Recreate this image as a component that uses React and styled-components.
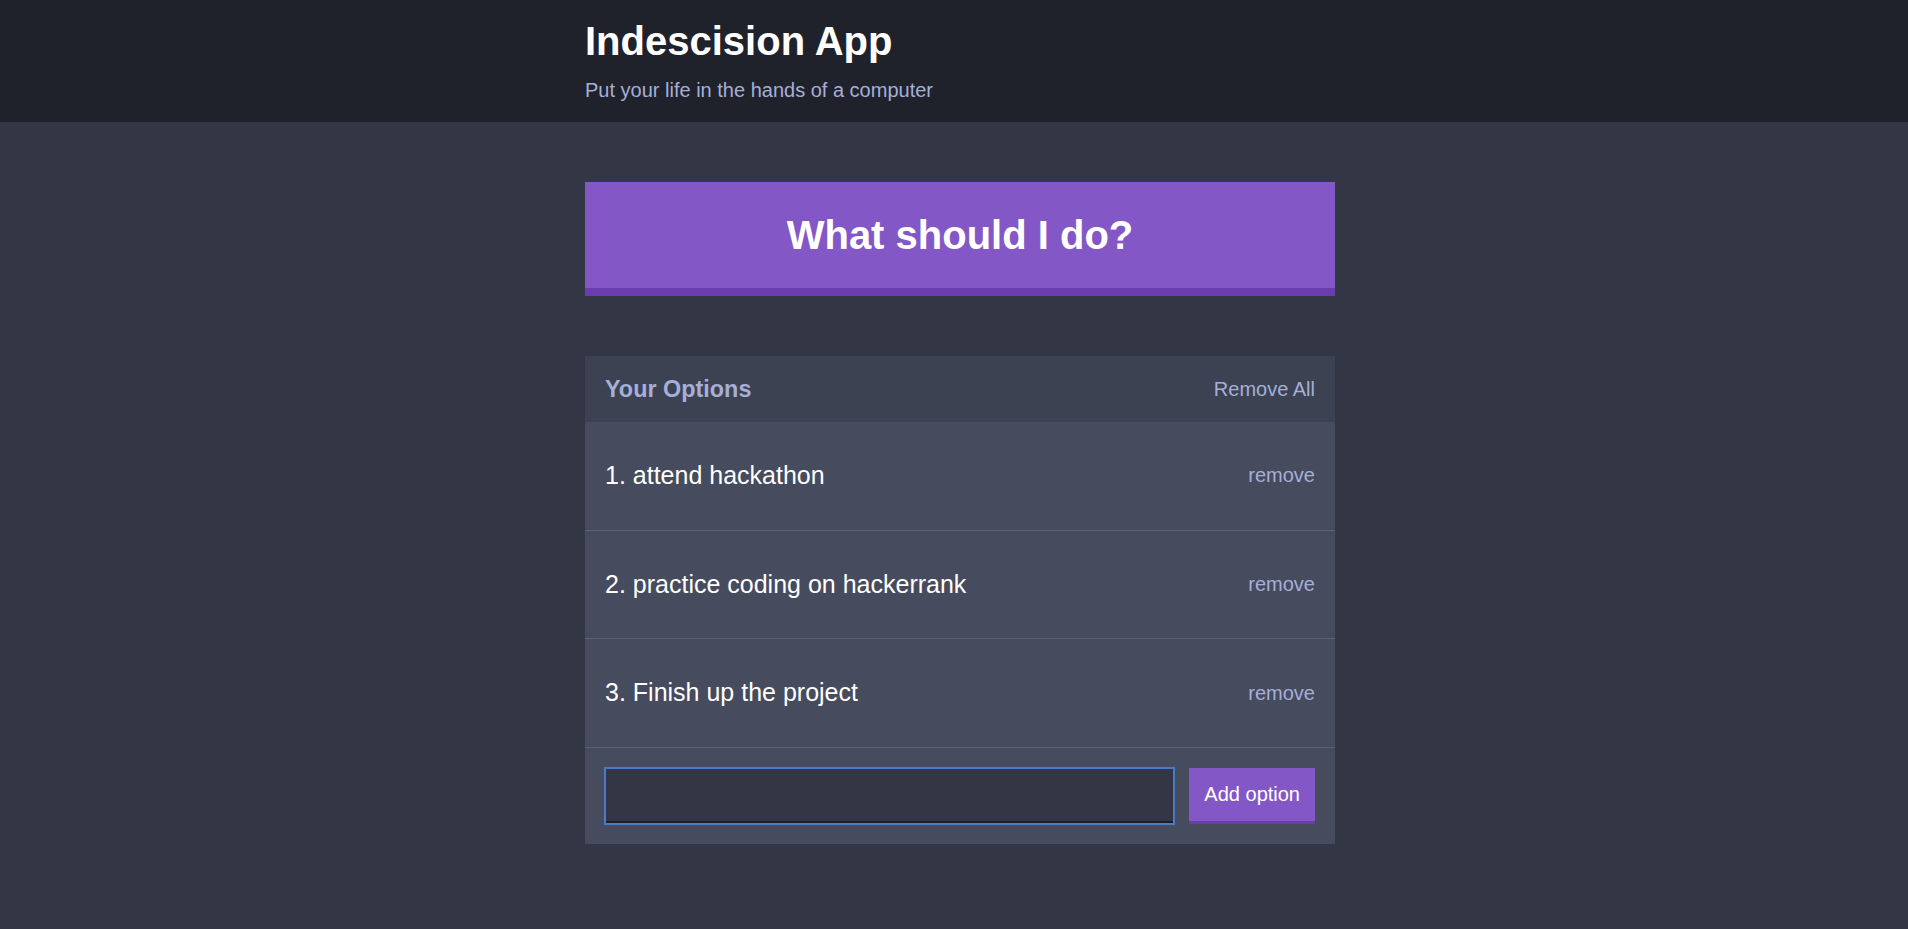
import React from 'react'
import styled, { createGlobalStyle } from 'styled-components';

const GlobalStyle = createGlobalStyle`
    * { box-sizing: border-box; }
    body {
        margin: 0;
        background: #333745;
        font-family: "Liberation Sans", Helvetica, Arial, sans-serif;
        font-size: 20px;
        color: #fff;
    }
    button, input { font-family: inherit; }
`

const Container = styled.div`
    box-sizing: content-box;
    max-width: 750px;
    margin: 0 auto;
    padding-left: 12px;
`

const HeaderStyle = styled.header`
    background: #20222b;
    color: white;
    margin-bottom: 60px;
    padding: 12px 0;

    h1 {
        font-size: 40px;
        font-weight: bold;
        line-height: 58px;
        margin: 0;
    }
    h2 {
        color: #a5afd7;
        font-size: 20px;
        font-weight: 500;
        line-height: 40px;
        margin: 0;
    }
`

const BigButton = styled.button`
    display: block;
    width: 100%;
    background: #8357c5;
    border: none;
    border-bottom: 8px solid #6a3cad;
    color: white;
    font-weight: bold;
    font-size: 40px;
    line-height: 46px;
    padding: 30px;
    margin-bottom: 60px;
    cursor: pointer;
`

const Widget = styled.div`
    background: #464b5e;
    margin-bottom: 60px;
`

const WidgetHeader = styled.div`
    background: #3c4251;
    color: #a5afd7;
    display: flex;
    justify-content: space-between;
    align-items: center;
    padding: 20px;

    h3 {
        margin: 0;
        font-size: 23.4px;
        font-weight: bold;
        line-height: 26px;
    }
`

const LinkButton = styled.button`
    background: none;
    border: none;
    color: #a5afd7;
    font-size: 20px;
    padding: 0;
    cursor: pointer;
`

const Option = styled.div`
    display: flex;
    justify-content: space-between;
    align-items: center;
    padding: 20px;
    border-bottom: 1px solid #5c627b;

    p {
        color: white;
        font-weight: 500;
        font-size: 25px;
        line-height: 27.7px;
        margin: 20px 0;
        word-break: break-all;
    }
`

const AddOptionForm = styled.form`
    display: flex;
    padding: 20px;
`

const Input = styled.input`
    background: #333745;
    border: none;
    border-bottom: 3.75px solid #1d1f27;
    color: #a5afd7;
    flex-grow: 1;
    margin: 0 15px 0 0;
    padding: 15px;
    font-size: 20px;
    outline: ${p => (p.$focused ? '2px solid #4a7bc9' : 'none')};
    outline-offset: -1px;
`

const Button = styled.button`
    background: #8357c5;
    border: none;
    border-bottom: 3.75px solid #6a3cad;
    color: white;
    font-weight: 500;
    font-size: 20px;
    line-height: 23px;
    padding: 15px;
    cursor: pointer;
`

const options = ['attend hackathon', 'practice coding on hackerrank', 'Finish up the project']

const App = () => {
  return (
    <>
      <GlobalStyle />
      <HeaderStyle>
        <Container>
          <h1>Indescision App</h1>
          <h2>Put your life in the hands of a computer</h2>
        </Container>
      </HeaderStyle>
      <Container>
        <BigButton>What should I do?</BigButton>
        <Widget>
          <WidgetHeader>
            <h3>Your Options</h3>
            <LinkButton>Remove All</LinkButton>
          </WidgetHeader>
          {options.map((option, i) => (
            <Option key={option}>
              <p>{i + 1}. {option}</p>
              <LinkButton>remove</LinkButton>
            </Option>
          ))}
          <AddOptionForm onSubmit={e => e.preventDefault()}>
            <Input type="text" name="option" $focused />
            <Button>Add option</Button>
          </AddOptionForm>
        </Widget>
      </Container>
    </>
  )
}

export default App
